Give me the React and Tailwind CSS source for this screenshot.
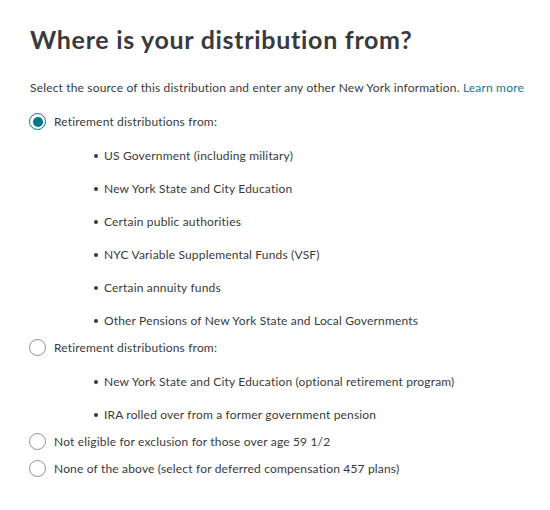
import React from "react";

const groupOne = [
  "US Government (including military)",
  "New York State and City Education",
  "Certain public authorities",
  "NYC Variable Supplemental Funds (VSF)",
  "Certain annuity funds",
  "Other Pensions of New York State and Local Governments",
];

const groupTwo = [
  "New York State and City Education (optional retirement program)",
  "IRA rolled over from a former government pension",
];

function Radio({ checked }) {
  return (
    <span
      className={
        "flex h-[17px] w-[17px] shrink-0 items-center justify-center rounded-full border " +
        (checked ? "border-[#00788a]" : "border-[#8d9096]")
      }
    >
      {checked && <span className="h-[10px] w-[10px] rounded-full bg-[#00788a]" />}
    </span>
  );
}

function Option({ checked, label, items }) {
  return (
    <div>
      <label className="flex h-[27px] items-center gap-[8px] pl-[29px]">
        <Radio checked={checked} />
        <span>{label}</span>
      </label>
      {items && (
        <ul className="flex flex-col gap-[15px] pt-[12px] pb-[4px]">
          {items.map((t) => (
            <li key={t} className="flex h-[18px] items-center pl-[94px]">
              <span className="mr-[6px] h-[4px] w-[4px] rounded-full bg-[#393a3d]" />
              {t}
            </li>
          ))}
        </ul>
      )}
    </div>
  );
}

export default function App() {
  return (
    <div
      className="min-h-[510px] bg-white pt-[24px] text-[12px] tracking-[0.17px] text-[#393a3d]"
      style={{ fontFamily: "Lato, 'Noto Sans', sans-serif" }}
    >
      <h1 className="pl-[30px] text-[25px] font-bold leading-[30px] tracking-[0.7px] text-[#393a3d]">
        Where is your distribution from?
      </h1>
      <p className="mt-[26px] pl-[30px] leading-[16px]">
        Select the source of this distribution and enter any other New York information.{" "}
        <a className="text-[#0d7c92]">Learn more</a>
      </p>
      <div className="mt-[12px]">
        <Option checked label="Retirement distributions from:" items={groupOne} />
        <Option label="Retirement distributions from:" items={groupTwo} />
        <Option label="Not eligible for exclusion for those over age 59 1/2" />
        <Option label="None of the above (select for deferred compensation 457 plans)" />
      </div>
    </div>
  );
}
